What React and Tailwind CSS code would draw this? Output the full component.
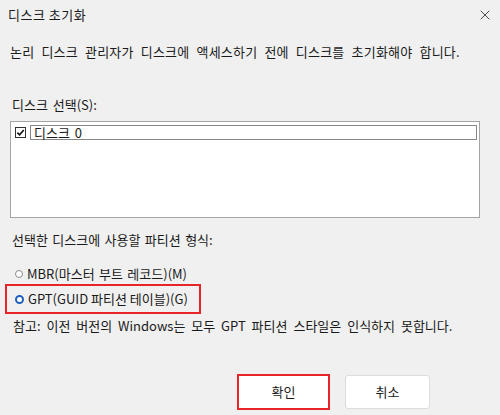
import { X } from 'lucide-react';

const FONT = { fontFamily: '"Noto Sans CJK KR", "Noto Sans", sans-serif' };

function Radio({ checked }) {
  return checked ? (
    <span className="w-[9px] h-[9px] rounded-full border-[2.5px] border-[#1f5fbf] bg-white shrink-0" />
  ) : (
    <span className="w-[8px] h-[8px] rounded-full border border-[#8a8a8a] bg-white shrink-0" />
  );
}

export default function App() {
  return (
    <div
      className="w-[500px] h-[415px] bg-[#f0f0f0] text-[#1a1a1a] text-[13px] flex flex-col overflow-hidden"
      style={FONT}
    >
      {/* Title bar */}
      <div className="h-[30px] flex items-center justify-between pl-[8px] pr-[7px]">
        <span className="text-[13px] tracking-[0.5px]">디스크 초기화</span>
        <X size={16} strokeWidth={1.2} className="text-[#222]" />
      </div>

      <p className="mt-[13px] pl-[10px] leading-[18px] tracking-[0.2px] [word-spacing:4px]">
        논리 디스크 관리자가 디스크에 액세스하기 전에 디스크를 초기화해야 합니다.
      </p>

      <p className="mt-[35px] pl-[12px] leading-[18px] [word-spacing:2px]">디스크 선택(S):</p>

      {/* Disk list */}
      <div className="mt-[7px] mx-[10px] mr-[20px] h-[97px] bg-white border border-[#a5a5a5] pt-[3px] pl-[4px] pr-[2px]">
        <div className="flex items-center gap-[4px]">
          <span className="w-[11px] h-[11px] border border-[#333] bg-white flex items-center justify-center shrink-0">
            <svg viewBox="0 0 10 10" className="w-[9px] h-[9px]">
              <path d="M1.5 5.2 L4 7.6 L8.6 2.2" fill="none" stroke="#111" strokeWidth="1.8" />
            </svg>
          </span>
          <div className="flex-1 h-[15px] border border-[#888] flex items-center pl-[3px] leading-none [word-spacing:2px]">
            디스크 0
          </div>
        </div>
      </div>

      <p className="mt-[13px] pl-[12px] leading-[18px] [word-spacing:1.5px]">
        선택한 디스크에 사용할 파티션 형식:
      </p>

      <div className="mt-[17px] pl-[15px] flex items-center gap-[4px] leading-[16px] [word-spacing:1.5px]">
        <Radio checked={false} />
        <span>MBR(마스터 부트 레코드)(M)</span>
      </div>

      <div className="mt-[2px] ml-[5px] w-[196px] h-[30px] border-2 border-[#e8242b] flex items-center pl-[8px] gap-[4px]">
        <Radio checked />
        <span>GPT(GUID 파티션 테이블)(G)</span>
      </div>

      <p className="mt-[3px] pl-[13px] leading-[18px] [word-spacing:3px]">
        참고: 이전 버전의 Windows는 모두 GPT 파티션 스타일은 인식하지 못합니다.
      </p>

      {/* Buttons */}
      <div className="mt-auto mb-[5px] flex items-center gap-[15px] pl-[237px]">
        <button className="w-[93px] h-[36px] border-2 border-[#e8242b] bg-white text-[13px]">
          확인
        </button>
        <button className="w-[85px] h-[34px] border border-[#dcdcdc] rounded-[3px] bg-white text-[13px]">
          취소
        </button>
      </div>
    </div>
  );
}
